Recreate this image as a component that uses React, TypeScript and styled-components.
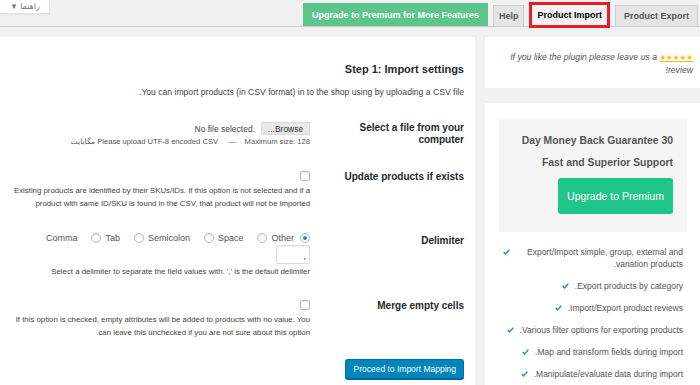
import React from 'react';
import styled, { createGlobalStyle } from 'styled-components';

const GlobalStyle = createGlobalStyle`
  html, body {
    margin: 0;
    height: 100%;
    overflow: hidden;
  }
  body {
    background: #f1f1f1;
    font-family: "Liberation Sans", "DejaVu Sans", Arial, sans-serif;
    color: #444;
    direction: rtl;
  }
  #root {
    height: 100%;
  }
`;

const features = [
  'Export/Import simple, group, external and variation products.',
  'Export products by category.',
  'Import/Export product reviews.',
  'Various filter options for exporting products.',
  'Map and transform fields during import.',
  'Manipulate/evaluate data during import.',
];

const delimiters = ['Tab', 'Semicolon', 'Space', 'Other'];

const CheckIcon = () => (
  <svg width="7" height="6" viewBox="0 0 7 6">
    <path d="M0.7 3.1 L2.6 4.9 L6.3 0.8" fill="none" stroke="#2b8fd6" strokeWidth="1.5" />
  </svg>
);

const App = () => {
  return (
    <Page>
      <GlobalStyle />
      <TabBar>
        <Tab $pad={8}>Product Export</Tab>
        <Tab $pad={5} $variant="active">
          Product Import
        </Tab>
        <Tab $pad={5}>Help</Tab>
        <Tab $pad={8} $variant="upgrade">
          Upgrade to Premium for More Features
        </Tab>
        <HelpToggle>راهنما ▼</HelpToggle>
      </TabBar>

      <Columns>
        <Main>
          <Heading>Step 1: Import settings</Heading>
          <Intro>You can import products (in CSV format) in to the shop using by uploading a CSV file.</Intro>

          <Form>
            <Label>Select a file from your computer</Label>
            <Field>
              <FileRow>
                <BrowseButton>Browse...</BrowseButton>
                <FileName>No file selected.</FileName>
              </FileRow>
              <Hint>
                {'Please upload UTF-8 encoded CSV\u00a0\u00a0\u00a0\u00a0\u00a0—\u00a0\u00a0\u00a0\u00a0Maximum size: 128 مگابایت'}
              </Hint>
            </Field>

            <Label>Update products if exists</Label>
            <Field>
              <CheckBox />
              <Description>
                Existing products are identified by their SKUs/IDs. If this option is not selected and if a
                product with same ID/SKU is found in the CSV, that product will not be imported.
              </Description>
            </Field>

            <Label $offset={3}>Delimiter</Label>
            <Field>
              <RadioRow>
                <span>Comma</span>
                {delimiters.map((d) => (
                  <RadioLabel key={d}>
                    <Radio />
                    {d}
                  </RadioLabel>
                ))}
                <Radio $checked />
              </RadioRow>
              <TextInput defaultValue="," />
              <Description $top={1}>
                Select a delimiter to separate the field values with. ',' is the default delimiter
              </Description>
            </Field>

            <Label>Merge empty cells</Label>
            <Field>
              <CheckBox />
              <Description>
                If this option is checked, empty attributes will be added to products with no value. You
                can leave this unchecked if you are not sure about this option.
              </Description>
            </Field>
          </Form>

          <PrimaryButton>Proceed to Import Mapping</PrimaryButton>
        </Main>

        <Sidebar>
          <ReviewBox>
            <ReviewNote>
              If you like the plugin please leave us a <Stars>★★★★★</Stars> review!
            </ReviewNote>
          </ReviewBox>
          <PromoBox>
            <Promo>
              <PromoLine>30 Day Money Back Guarantee</PromoLine>
              <PromoLine>Fast and Superior Support</PromoLine>
              <PromoButton>Upgrade to Premium</PromoButton>
            </Promo>
            <FeatureList>
              {features.map((f) => (
                <Feature key={f}>
                  <span>{f}</span>
                  <CheckIcon />
                </Feature>
              ))}
            </FeatureList>
          </PromoBox>
        </Sidebar>
      </Columns>
    </Page>
  );
};

export default App;

const Page = styled.div`
  display: flex;
  flex-direction: column;
  height: 100%;
`;

const TabBar = styled.div`
  display: flex;
  align-items: flex-end;
  gap: 5px;
  height: 26px;
  padding-right: 2px;
  border-bottom: 1px solid #ccc;
  flex-shrink: 0;
`;

const Tab = styled.div<{ $pad: number; $variant?: 'upgrade' | 'active' }>`
  display: flex;
  align-items: center;
  box-sizing: border-box;
  height: ${(p) => (p.$variant === 'active' ? 26 : p.$variant === 'upgrade' ? 23 : 21)}px;
  margin-bottom: ${(p) => (p.$variant === 'active' ? -2 : 0)}px;
  padding: 0 ${(p) => p.$pad}px;
  font-size: 9px;
  font-weight: bold;
  white-space: nowrap;
  color: ${(p) => (p.$variant === 'upgrade' ? '#fff' : p.$variant === 'active' ? '#000' : '#555')};
  background: ${(p) => (p.$variant === 'upgrade' ? '#5cc58b' : p.$variant === 'active' ? '#f4f4f4' : '#e5e5e5')};
  border: ${(p) => (p.$variant === 'active' ? '3px solid #ea1c24' : p.$variant === 'upgrade' ? '1px solid #5cc58b' : '1px solid #ccc')};
  border-bottom: ${(p) => (p.$variant === 'active' ? '3px solid #ea1c24' : 'none')};
`;

const HelpToggle = styled.div`
  align-self: flex-start;
  margin-right: auto;
  height: 14px;
  box-sizing: border-box;
  padding: 0 9px 0 10px;
  display: flex;
  align-items: center;
  font-size: 8px;
  color: #72777c;
  background: #fff;
  border: 1px solid #e2e2e2;
  border-top: none;
  border-left: none;
  box-shadow: 0 1px 1px rgba(0, 0, 0, 0.04);
`;

const Columns = styled.div`
  direction: ltr;
  display: grid;
  grid-template-columns: 475px 1fr;
  column-gap: 10px;
  margin-top: 10px;
  flex: 1;
  min-height: 0;
`;

const Main = styled.div`
  direction: rtl;
  background: #fff;
  padding: 25px 11px 0 12px;
`;

const Heading = styled.h2`
  margin: 0;
  font-size: 11px;
  line-height: 14px;
  font-weight: bold;
  color: #23282d;
`;

const Intro = styled.p`
  margin: 10px 0 0;
  font-size: 8.6px;
  line-height: 12px;
  color: #444;
`;

const Form = styled.div`
  display: grid;
  grid-template-columns: 154px 1fr;
  row-gap: 22px;
  align-items: start;
  margin-top: 24px;
`;

const Label = styled.div<{ $offset?: number }>`
  padding: ${(p) => p.$offset ?? 0}px 0 0 10px;
  font-size: 10px;
  line-height: 12px;
  font-weight: bold;
  color: #23282d;
`;

const Field = styled.div`
  display: flex;
  flex-direction: column;
  align-items: flex-start;
`;

const FileRow = styled.div`
  display: flex;
  align-items: center;
  gap: 6px;
  height: 13px;
  font-size: 8.5px;
  color: #444;
`;

const FileName = styled.span`
  direction: ltr;
  unicode-bidi: isolate;
`;

const BrowseButton = styled.span`
  box-sizing: border-box;
  height: 13px;
  width: 49px;
  display: flex;
  align-items: center;
  justify-content: center;
  background: #e9e9e9;
  border: 1px solid #dadada;
  font-size: 8.5px;
  color: #333;
`;

const Hint = styled.div`
  font-size: 7.6px;
  line-height: 14px;
  color: #555;
`;

const CheckBox = styled.span`
  box-sizing: border-box;
  width: 10px;
  height: 10px;
  margin: 0 0 3px;
  border: 1px solid #b4b9be;
  border-radius: 2px;
  background: #fff;
  box-shadow: inset 0 1px 2px rgba(0, 0, 0, 0.1);
`;

const Description = styled.div<{ $top?: number }>`
  margin-top: ${(p) => p.$top ?? 0}px;
  font-size: 7.8px;
  line-height: 13px;
  color: #444;
`;

const RadioRow = styled.div`
  direction: ltr;
  display: flex;
  align-items: center;
  height: 12px;
  gap: 14px;
  font-size: 9px;
  color: #555;
  & > :last-child {
    margin-left: -8px;
  }
`;

const RadioLabel = styled.span`
  display: flex;
  align-items: center;
  gap: 4px;
`;

const Radio = styled.span<{ $checked?: boolean }>`
  box-sizing: border-box;
  width: 10px;
  height: 10px;
  border-radius: 50%;
  border: 1px solid #b4b9be;
  background: #fff;
  box-shadow: inset 0 1px 2px rgba(0, 0, 0, 0.1);
  display: flex;
  align-items: center;
  justify-content: center;
  &::after {
    content: '';
    display: ${(p) => (p.$checked ? 'block' : 'none')};
    width: 4px;
    height: 4px;
    border-radius: 50%;
    background: #1e8cbe;
  }
`;

const TextInput = styled.input`
  box-sizing: border-box;
  width: 34px;
  height: 19px;
  margin: 1px 0 0;
  padding: 3px 3px 0;
  border: 1px solid #ddd;
  border-radius: 2px;
  box-shadow: inset 0 1px 2px rgba(0, 0, 0, 0.07);
  font-family: inherit;
  font-size: 9px;
  color: #32373c;
  direction: rtl;
  outline: none;
`;

const PrimaryButton = styled.button`
  display: block;
  margin-top: 20px;
  height: 20px;
  padding: 0 7px;
  font-family: inherit;
  font-size: 8.5px;
  color: #fff;
  background: #0085ba;
  border: 1px solid #0073aa;
  border-bottom-color: #006799;
  border-radius: 3px;
  box-shadow: 0 1px 0 #006799;
`;

const Sidebar = styled.div`
  direction: rtl;
  display: flex;
  flex-direction: column;
  gap: 15px;
`;

const ReviewBox = styled.div`
  box-sizing: border-box;
  height: 51px;
  padding: 14px 7px 0 12px;
  background: #fff;
`;

const ReviewNote = styled.div`
  font-size: 8.7px;
  line-height: 12px;
  font-style: italic;
  color: #555;
`;

const Stars = styled.span`
  color: #ffb900;
  text-decoration: underline;
  font-style: normal;
  font-size: 7.5px;
`;

const PromoBox = styled.div`
  flex: 1;
  padding: 16px 13px 0 14px;
  background: #fff;
`;

const Promo = styled.div`
  display: flex;
  flex-direction: column;
  align-items: flex-start;
  padding: 11px 14px 18px;
  background: #f5f5f5;
`;

const PromoLine = styled.div`
  font-size: 10.4px;
  line-height: 22px;
  font-weight: bold;
  color: #555;
`;

const PromoButton = styled.div`
  margin-top: 4px;
  width: 115px;
  height: 36px;
  display: flex;
  align-items: center;
  justify-content: center;
  border-radius: 3px;
  background: #1fc58b;
  color: #fff;
  font-size: 10.5px;
`;

const FeatureList = styled.div`
  display: flex;
  flex-direction: column;
  align-items: flex-start;
  gap: 10px;
  margin: 14px 4px 0 0;
`;

const Feature = styled.div`
  display: flex;
  align-items: flex-start;
  gap: 6px;
  max-width: 180px;
  font-size: 8.5px;
  line-height: 12px;
  color: #555;
  svg {
    flex-shrink: 0;
    margin-top: 3px;
  }
`;
